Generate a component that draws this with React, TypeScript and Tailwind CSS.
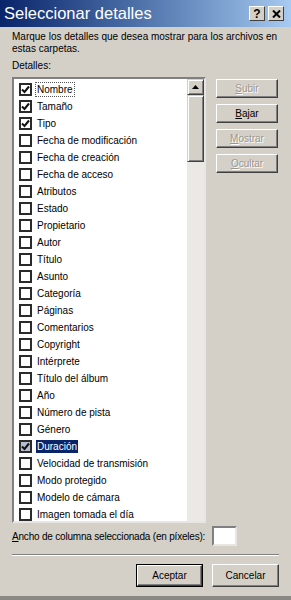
import React from "react";

const items = [
  { name: "Nombre", checked: true },
  { name: "Tamaño", checked: true },
  { name: "Tipo", checked: true },
  { name: "Fecha de modificación" },
  { name: "Fecha de creación" },
  { name: "Fecha de acceso" },
  { name: "Atributos" },
  { name: "Estado" },
  { name: "Propietario" },
  { name: "Autor" },
  { name: "Título" },
  { name: "Asunto" },
  { name: "Categoría" },
  { name: "Páginas" },
  { name: "Comentarios" },
  { name: "Copyright" },
  { name: "Intérprete" },
  { name: "Título del álbum" },
  { name: "Año" },
  { name: "Número de pista" },
  { name: "Género" },
  { name: "Duración", checked: true, selected: true },
  { name: "Velocidad de transmisión" },
  { name: "Modo protegido" },
  { name: "Modelo de cámara" },
  { name: "Imagen tomada el día" },
];

function Check({ on, sel }: { on?: boolean; sel?: boolean }) {
  return (
    <span
      className={`flex h-[13px] w-[13px] shrink-0 items-center justify-center border-2 border-[#2a2a2a] ${
        sel ? "bg-[#b6bdd2]" : "bg-white"
      }`}
    >
      {on && (
        <svg width="9" height="9" viewBox="0 0 9 9">
          <path d="M1 4.5 L3.5 7 L8 1.5" fill="none" stroke="#111" strokeWidth="2" />
        </svg>
      )}
    </span>
  );
}

function SideButton({ label, u, disabled }: { label: string; u: string; disabled?: boolean }) {
  const rest = label.slice(1);
  return (
    <div className="h-[19px] w-[62px] border border-t-white border-l-white border-r-[#404040] border-b-[#404040] bg-[#d4d0c8] shadow-[inset_-1px_-1px_0_#808080]">
      <div
        className={`flex h-full items-center justify-center text-[10px] ${
          disabled ? "text-[#9a9892] [text-shadow:1px_1px_0_#fff]" : "text-black"
        }`}
      >
        <span className="underline underline-offset-1">{u}</span>
        {rest}
      </div>
    </div>
  );
}

export default function App() {
  return (
    <div
      className="flex h-[600px] w-[291px] flex-col overflow-hidden bg-[#d4d0c8] text-black"
      style={{ fontFamily: '"Liberation Sans", Arial, sans-serif' }}
    >
      <div className="flex h-[27px] shrink-0 items-center justify-between bg-gradient-to-r from-[#0a246a] to-[#a6caf0] pl-[4px] pr-[7px]">
        <span className="text-[16.5px] leading-none text-white">Seleccionar detalles</span>
        <div className="flex gap-[3px]">
          <div className="flex h-[15px] w-[16px] items-center justify-center border border-t-white border-l-white border-r-[#404040] border-b-[#404040] bg-[#d4d0c8] text-[12px] font-bold leading-none">
            ?
          </div>
          <div className="flex h-[15px] w-[16px] items-center justify-center border border-t-white border-l-white border-r-[#404040] border-b-[#404040] bg-[#d4d0c8]">
            <svg width="9" height="8" viewBox="0 0 9 8">
              <path d="M1 0.5 L8 7.5 M8 0.5 L1 7.5" stroke="#000" strokeWidth="2" />
            </svg>
          </div>
        </div>
      </div>

      <div className="flex flex-1 flex-col px-[12px]">
        <p className="mt-[4px] text-[10px] leading-[12px]">
          Marque los detalles que desea mostrar para los archivos en estas carpetas.
        </p>
        <p className="mt-[5px] text-[10px] leading-[12px]">Detalles:</p>

        <div className="mt-[5px] flex gap-[10px]">
          <div className="flex h-[446px] w-[194px] border-2 border-t-[#808080] border-l-[#808080] border-r-[#e8e6e2] border-b-[#e8e6e2] bg-white">
            <div className="flex-1 overflow-hidden pt-[2px]">
              {items.map((it, i) => (
                <div key={i} className="flex h-[17px] items-center pl-[5px]">
                  <Check on={it.checked} sel={it.selected} />
                  <span
                    className={`ml-[4px] px-[1px] text-[10px] leading-[13px] ${
                      it.selected ? "bg-[#0a246a] text-white" : ""
                    } ${i === 0 ? "outline outline-1 outline-dotted outline-[#555]" : ""}`}
                  >
                    {it.name}
                  </span>
                </div>
              ))}
            </div>
            <div className="flex w-[17px] flex-col bg-[#ebe9e5]">
              <div className="flex h-[16px] items-center justify-center border border-t-[#d4d0c8] border-l-[#d4d0c8] border-r-[#404040] border-b-[#404040] bg-[#d4d0c8] shadow-[inset_1px_1px_0_#fff,inset_-1px_-1px_0_#808080]">
                <svg width="7" height="4" viewBox="0 0 7 4">
                  <path d="M3.5 0 L7 4 L0 4 Z" fill="#000" />
                </svg>
              </div>
              <div className="h-[67px] border border-t-[#d4d0c8] border-l-[#d4d0c8] border-r-[#404040] border-b-[#404040] bg-[#d4d0c8] shadow-[inset_1px_1px_0_#fff,inset_-1px_-1px_0_#808080]" />
            </div>
          </div>

          <div className="flex flex-col gap-[6px] pt-[2px]">
            <SideButton label="Subir" u="S" disabled />
            <SideButton label="Bajar" u="B" />
            <SideButton label="Mostrar" u="M" disabled />
            <SideButton label="Ocultar" u="O" disabled />
          </div>
        </div>

        <div className="mt-[3px] flex items-center">
          <span className="w-[200px] whitespace-nowrap text-[10px] tracking-[-0.2px]">
            <span className="underline">A</span>ncho de columna seleccionada (en píxeles):
          </span>
          <div className="h-[20px] w-[25px] border-2 border-t-[#808080] border-l-[#808080] border-r-[#e8e6e2] border-b-[#e8e6e2] bg-white" />
        </div>

        <div className="mt-[8px] h-[2px] border-t border-t-[#808080] border-b border-b-white" />

        <div className="mt-[8px] flex justify-end gap-[9px]">
          <div className="h-[23px] w-[67px] border border-black">
            <div className="flex h-full items-center justify-center border border-t-white border-l-white border-r-[#404040] border-b-[#404040] text-[10px] shadow-[inset_-1px_-1px_0_#808080]">
              Aceptar
            </div>
          </div>
          <div className="flex h-[23px] w-[67px] items-center justify-center border border-t-white border-l-white border-r-[#404040] border-b-[#404040] text-[10px] shadow-[inset_-1px_-1px_0_#808080]">
            Cancelar
          </div>
        </div>
      </div>
      <div className="h-[4px] shrink-0 bg-[#8a8883]" />
    </div>
  );
}
